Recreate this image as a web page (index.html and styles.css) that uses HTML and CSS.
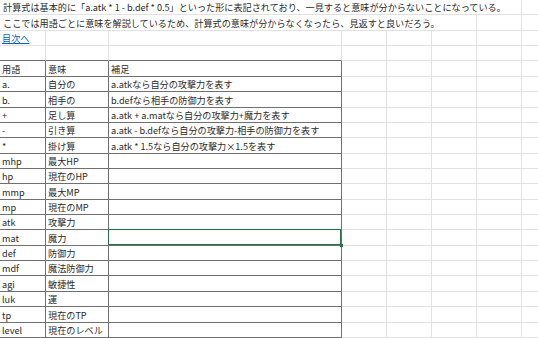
FILE: index.html
```html
<!DOCTYPE html>
<html lang="ja">
<head>
<meta charset="utf-8">
<link rel="stylesheet" href="styles.css">
</head>
<body>
<div class="sheet">
  <div class="c span7">計算式は基本的に「a.atk * 1 - b.def * 0.5」といった形に表記されており、一見すると意味が分からないことになっている。</div><div class="c"></div>
  <div class="c span6">ここでは用語ごとに意味を解説しているため、計算式の意味が分からなくなったら、見返すと良いだろう。</div><div class="c"></div><div class="c"></div>
  <div class="c"><a class="link" href="#">目次へ</a></div><div class="c"></div><div class="c"></div><div class="c"></div><div class="c"></div><div class="c"></div><div class="c"></div><div class="c"></div>
  <div class="c top"></div><div class="c top"></div><div class="c top"></div><div class="c"></div><div class="c"></div><div class="c"></div><div class="c"></div><div class="c"></div>

  <div class="c t">用語</div><div class="c t">意味</div><div class="c t">補足</div><div class="c"></div><div class="c"></div><div class="c"></div><div class="c"></div><div class="c"></div>
  <div class="c t">a.</div><div class="c t">自分の</div><div class="c t">a.atkなら自分の攻撃力を表す</div><div class="c"></div><div class="c"></div><div class="c"></div><div class="c"></div><div class="c"></div>
  <div class="c t">b.</div><div class="c t">相手の</div><div class="c t">b.defなら相手の防御力を表す</div><div class="c"></div><div class="c"></div><div class="c"></div><div class="c"></div><div class="c"></div>
  <div class="c t">+</div><div class="c t">足し算</div><div class="c t">a.atk + a.matなら自分の攻撃力+魔力を表す</div><div class="c"></div><div class="c"></div><div class="c"></div><div class="c"></div><div class="c"></div>
  <div class="c t">-</div><div class="c t">引き算</div><div class="c t">a.atk - b.defなら自分の攻撃力-相手の防御力を表す</div><div class="c"></div><div class="c"></div><div class="c"></div><div class="c"></div><div class="c"></div>
  <div class="c t">*</div><div class="c t">掛け算</div><div class="c t">a.atk * 1.5なら自分の攻撃力×1.5を表す</div><div class="c"></div><div class="c"></div><div class="c"></div><div class="c"></div><div class="c"></div>
  <div class="c t">mhp</div><div class="c t">最大HP</div><div class="c t"></div><div class="c"></div><div class="c"></div><div class="c"></div><div class="c"></div><div class="c"></div>
  <div class="c t">hp</div><div class="c t">現在のHP</div><div class="c t"></div><div class="c"></div><div class="c"></div><div class="c"></div><div class="c"></div><div class="c"></div>
  <div class="c t">mmp</div><div class="c t">最大MP</div><div class="c t"></div><div class="c"></div><div class="c"></div><div class="c"></div><div class="c"></div><div class="c"></div>
  <div class="c t">mp</div><div class="c t">現在のMP</div><div class="c t"></div><div class="c"></div><div class="c"></div><div class="c"></div><div class="c"></div><div class="c"></div>
  <div class="c t">atk</div><div class="c t">攻撃力</div><div class="c t"></div><div class="c"></div><div class="c"></div><div class="c"></div><div class="c"></div><div class="c"></div>
  <div class="c t">mat</div><div class="c t">魔力</div><div class="c t sel"><span class="selbox"></span><span class="handle"></span></div><div class="c"></div><div class="c"></div><div class="c"></div><div class="c"></div><div class="c"></div>
  <div class="c t">def</div><div class="c t">防御力</div><div class="c t"></div><div class="c"></div><div class="c"></div><div class="c"></div><div class="c"></div><div class="c"></div>
  <div class="c t">mdf</div><div class="c t">魔法防御力</div><div class="c t"></div><div class="c"></div><div class="c"></div><div class="c"></div><div class="c"></div><div class="c"></div>
  <div class="c t">agi</div><div class="c t">敏捷性</div><div class="c t"></div><div class="c"></div><div class="c"></div><div class="c"></div><div class="c"></div><div class="c"></div>
  <div class="c t">luk</div><div class="c t">運</div><div class="c t"></div><div class="c"></div><div class="c"></div><div class="c"></div><div class="c"></div><div class="c"></div>
  <div class="c t">tp</div><div class="c t">現在のTP</div><div class="c t"></div><div class="c"></div><div class="c"></div><div class="c"></div><div class="c"></div><div class="c"></div>
  <div class="c t">level</div><div class="c t">現在のレベル</div><div class="c t"></div><div class="c"></div><div class="c"></div><div class="c"></div><div class="c"></div><div class="c"></div>
</div>
</body>
</html>
```
FILE: styles.css
```css
html, body {
  margin: 0;
  padding: 0;
  background: #ffffff;
  overflow: hidden;
}

.sheet {
  display: grid;
  grid-template-columns: 46px 63px 233px 45px 45px 45px 45px 40px;
  grid-auto-rows: 15.36px;
  font-family: "Noto Sans CJK JP", "Noto Sans", sans-serif;
  font-size: 9.15px;
  line-height: 12px;
  color: #2b2b2b;
}

.c {
  box-sizing: border-box;
  border-right: 1px solid #e2e2e2;
  border-bottom: 1px solid #e2e2e2;
  padding: 0 0 1px 2px;
  display: flex;
  align-items: flex-end;
  white-space: nowrap;
  min-width: 0;
}

.span7 { grid-column: span 7; padding-left: 3px; }
.span6 { grid-column: span 6; padding-left: 3px; }

.top { border-bottom-color: #707070; }

.t {
  border-right-color: #707070;
  border-bottom-color: #707070;
}

.sheet > .c:nth-child(8n+1) { padding-left: 3px; }

.link {
  color: #0563c1;
  text-decoration: underline;
}

.sel { position: relative; }

.selbox {
  position: absolute;
  left: -1px;
  top: -1px;
  width: calc(100% + 1px);
  height: calc(100% + 1px);
  box-sizing: border-box;
  border: 1px solid #217346;
  z-index: 2;
}

.handle {
  position: absolute;
  right: -2px;
  bottom: -2px;
  width: 3px;
  height: 3px;
  background: #217346;
  z-index: 3;
}
```
